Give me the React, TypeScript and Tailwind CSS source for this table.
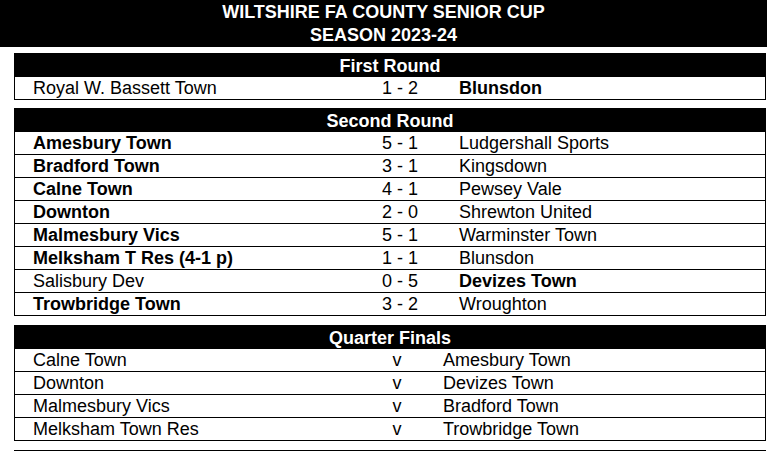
import React from "react";

type Result = { home: string; score: string; away: string; win: "home" | "away" | "none" };

const firstRound: Result[] = [
  { home: "Royal W. Bassett Town", score: "1 - 2", away: "Blunsdon", win: "away" },
];

const secondRound: Result[] = [
  { home: "Amesbury Town", score: "5 - 1", away: "Ludgershall Sports", win: "home" },
  { home: "Bradford Town", score: "3 - 1", away: "Kingsdown", win: "home" },
  { home: "Calne Town", score: "4 - 1", away: "Pewsey Vale", win: "home" },
  { home: "Downton", score: "2 - 0", away: "Shrewton United", win: "home" },
  { home: "Malmesbury Vics", score: "5 - 1", away: "Warminster Town", win: "home" },
  { home: "Melksham T Res (4-1 p)", score: "1 - 1", away: "Blunsdon", win: "home" },
  { home: "Salisbury Dev", score: "0 - 5", away: "Devizes Town", win: "away" },
  { home: "Trowbridge Town", score: "3 - 2", away: "Wroughton", win: "home" },
];

const quarterFinals = [
  ["Calne Town", "Amesbury Town"],
  ["Downton", "Devizes Town"],
  ["Malmesbury Vics", "Bradford Town"],
  ["Melksham Town Res", "Trowbridge Town"],
];

function Header({ title }: { title: string }) {
  return (
    <div className="h-[24px] bg-black text-white font-bold text-[18px] leading-[27px] text-center">
      {title}
    </div>
  );
}

function ResultRow({ r }: { r: Result }) {
  return (
    <div className="grid grid-cols-[355px_60px_1fr] h-[23px] border-b border-black leading-[23px] whitespace-nowrap">
      <div className={"pl-[18px] " + (r.win === "home" ? "font-bold" : "")}>{r.home}</div>
      <div className="text-center">{r.score}</div>
      <div className={"pl-[29px] " + (r.win === "away" ? "font-bold" : "")}>{r.away}</div>
    </div>
  );
}

export default function App() {
  return (
    <div
      className="w-[767px] h-[451px] overflow-hidden bg-white text-black text-[18px]"
      style={{ fontFamily: '"Liberation Sans", Arial, sans-serif' }}
    >
      <div className="h-[47px] bg-black text-white font-bold text-[18px] leading-[23px] text-center pt-[1px]">
        <div>WILTSHIRE FA COUNTY SENIOR CUP</div>
        <div>SEASON 2023-24</div>
      </div>

      <div className="ml-[14px] w-[752px]">
        <div className="mt-[6px] border-x border-black">
          <Header title="First Round" />
          {firstRound.map((r) => (
            <ResultRow key={r.home} r={r} />
          ))}
        </div>

        <div className="mt-[8px] border-x border-black">
          <Header title="Second Round" />
          {secondRound.map((r) => (
            <ResultRow key={r.home} r={r} />
          ))}
        </div>

        <div className="mt-[9px] border-x border-black">
          <Header title="Quarter Finals" />
          {quarterFinals.map(([a, b]) => (
            <div
              key={a}
              className="grid grid-cols-[355px_54px_1fr] h-[23px] border-b border-black leading-[23px] whitespace-nowrap"
            >
              <div className="pl-[18px]">{a}</div>
              <div className="text-center">v</div>
              <div className="pl-[19px]">{b}</div>
            </div>
          ))}
        </div>

        <div className="mt-[9px] h-[1px] bg-black" />
      </div>
    </div>
  );
}
